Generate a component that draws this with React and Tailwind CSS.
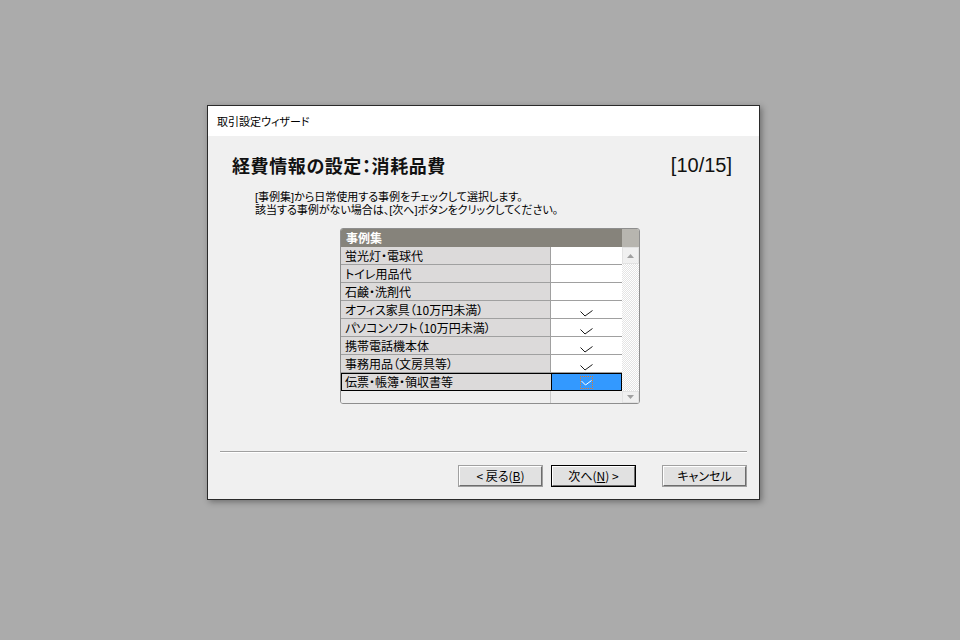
import React from "react";

const rows = [
  { label: "蛍光灯・電球代", checked: false },
  { label: "トイレ用品代", checked: false },
  { label: "石鹸・洗剤代", checked: false },
  { label: "オフィス家具（10万円未満）", checked: true },
  { label: "パソコンソフト（10万円未満）", checked: true },
  { label: "携帯電話機本体", checked: true },
  { label: "事務用品（文房具等）", checked: true },
  { label: "伝票・帳簿・領収書等", checked: true, selected: true },
];

const font = { fontFamily: '"Noto Sans CJK JP", "Noto Sans", sans-serif' };

function Check({ color = "#1a1a1a" }) {
  return (
    <svg width="13" height="7" viewBox="0 0 13 7" fill="none">
      <path d="M0.5 1.5 L5 6 L12.5 0.5" stroke={color} strokeWidth="1" />
    </svg>
  );
}

function Arrow({ up }) {
  return (
    <svg width="7" height="4" viewBox="0 0 7 4">
      <path d={up ? "M0 4 L3.5 0 L7 4 Z" : "M0 0 L3.5 4 L7 0 Z"} fill="#a0a0a0" />
    </svg>
  );
}

function Button({ children, primary }) {
  return (
    <button
      className={`h-[22px] w-[85px] bg-[#e1e1e1] text-[12px] text-black flex items-center justify-center [font-feature-settings:'palt'] ${
        primary ? "border border-black" : "border border-[#a0a0a0]"
      }`}
    >
      <span className="w-full h-full flex items-center justify-center border border-t-white border-l-white border-r-[#6d6d6d] border-b-[#6d6d6d]">
        {children}
      </span>
    </button>
  );
}

export default function App() {
  return (
    <div className="min-h-screen w-full bg-[#ababab] pt-[105px] pl-[207px]" style={font}>
      <div className="w-[553px] h-[395px] border border-[#2a2a2a] bg-[#f0f0f0] flex flex-col shadow-[2px_2px_6px_rgba(0,0,0,0.35)]">
        {/* title bar */}
        <div className="h-[30px] bg-white flex items-center pl-[9px] text-[11px] text-black [font-feature-settings:'palt']">
          取引設定ウィザード
        </div>

        <div className="flex-1 flex flex-col">
          {/* heading */}
          <div className="mt-[19px] pl-[24px] pr-[27px] flex items-center justify-between h-[20px]">
            <div className="text-[18px] font-bold text-[#111] [font-feature-settings:'palt'] tracking-[0.6px]">
              経費情報の設定：消耗品費
            </div>
            <div
              className="text-[20px] text-[#111]"
              style={{ fontFamily: '"Liberation Sans", Arial, sans-serif' }}
            >
              [10/15]
            </div>
          </div>

          {/* description */}
          <div
            className="mt-[16px] ml-[47px] text-[11px] leading-[13px] text-black [font-feature-settings:'palt']"
            style={{ fontFamily: '"Liberation Sans", "Noto Sans CJK JP", sans-serif' }}
          >
            <p>[事例集]から日常使用する事例をチェックして選択します。</p>
            <p>該当する事例がない場合は、[次へ]ボタンをクリックしてください。</p>
          </div>

          {/* table */}
          <div className="mt-[11px] ml-[132px] w-[300px] h-[176px] border border-[#8e8e8e] rounded-[3px] overflow-hidden flex bg-[#f0f0f0]">
            <div className="w-[281px] flex flex-col">
              <div className="h-[18px] shrink-0 bg-[#86837b] text-white font-bold text-[12px] pl-[5px] flex items-center">
                事例集
              </div>
              {rows.map((r) => (
                <div
                  key={r.label}
                  className={`h-[18px] shrink-0 flex text-[12px] text-black [font-feature-settings:'palt'] ${
                    r.selected ? "border border-black" : "border-b border-[#a0a0a0]"
                  }`}
                >
                  <div
                    className={`w-[210px] shrink-0 bg-[#dcdada] border-r flex items-center ${
                      r.selected ? "border-black pl-[3px]" : "border-[#a0a0a0] pl-[4px]"
                    }`}
                  >
                    {r.label}
                  </div>
                  <div
                    className={`flex-1 flex justify-center ${
                      r.selected ? "bg-[#3399ff] items-center" : "bg-white items-end pb-[1px]"
                    }`}
                  >
                    {r.checked &&
                      (r.selected ? (
                        <div className="w-[13px] h-[13px] border border-dotted border-[#e07a2a] flex items-end justify-center pb-[2px]">
                          <svg width="11" height="6" viewBox="0 0 11 6" fill="none">
                            <path d="M0.5 1 L4.5 5 L10.5 0.5" stroke="#ffffff" strokeWidth="1" />
                          </svg>
                        </div>
                      ) : (
                        <Check />
                      ))}
                  </div>
                </div>
              ))}
              <div className="flex-1 flex">
                <div className="w-[210px] bg-[#efefef] border-r border-[#c8c8c8]" />
                <div className="flex-1 bg-[#efefef]" />
              </div>
            </div>

            {/* scrollbar */}
            <div className="w-[17px] flex flex-col">
              <div className="h-[18px] shrink-0 bg-[#b7b5af]" />
              <div className="h-[17px] shrink-0 bg-[#f0f0f0] border border-[#e2e2e2] flex items-center justify-center">
                <Arrow up />
              </div>
              <div className="flex-1 bg-[repeating-conic-gradient(#e4e4e4_0_25%,#ffffff_0_50%)] bg-[length:2px_2px]" />
              <div className="h-[12px] shrink-0 bg-[#f0f0f0] border border-[#e2e2e2] flex items-center justify-center">
                <Arrow />
              </div>
            </div>
          </div>

          {/* separator */}
          <div className="mt-[47px] ml-[12px] w-[527px] h-[2px] flex flex-col">
            <div className="h-px bg-[#a0a0a0]" />
            <div className="h-px bg-white" />
          </div>

          {/* buttons */}
          <div className="mt-[12px] flex items-center pl-[250px]">
            <Button>
              &lt; 戻る(<span className="underline">B</span>)
            </Button>
            <div className="w-[8px]" />
            <Button primary>
              次へ(<span className="underline">N</span>) &gt;
            </Button>
            <div className="w-[26px]" />
            <Button>キャンセル</Button>
          </div>
        </div>
      </div>
    </div>
  );
}
